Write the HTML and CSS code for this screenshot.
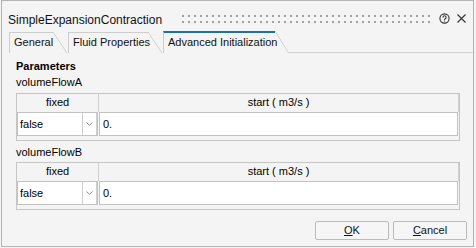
FILE: index.html
```html
<!DOCTYPE html>
<html>
<head>
<meta charset="utf-8">
<link rel="stylesheet" href="styles.css">
</head>
<body>
<div class="window">
  <div class="titlebar">
    <div class="title">SimpleExpansionContraction</div>
    <div class="grip"></div>
    <svg class="help" width="11" height="11" viewBox="0 0 11 11">
      <circle cx="5.5" cy="5.5" r="4.6" fill="none" stroke="#333" stroke-width="1.1"/>
      <path d="M3.9 4.4a1.6 1.6 0 1 1 2.3 1.45c-0.5 0.25-0.7 0.55-0.7 1.1" fill="none" stroke="#333" stroke-width="1.1"/>
      <circle cx="5.5" cy="8.1" r="0.65" fill="#333"/>
    </svg>
    <svg class="close" width="9" height="9" viewBox="0 0 9 9">
      <path d="M0.5 0.5L8.5 8.5M8.5 0.5L0.5 8.5" stroke="#333" stroke-width="1.1"/>
    </svg>
  </div>
  <div class="tabbar">
    <div class="tab tab-general">General</div>
    <div class="tab tab-fluid">Fluid Properties</div>
    <div class="tab tab-active">Advanced Initialization</div>
    <div class="tab-fill"></div>
  </div>
  <div class="pane">
    <div class="section">Parameters</div>
    <div class="label">volumeFlowA</div>
    <div class="grid">
      <div class="hdr">
        <div class="hcell hfixed">fixed</div>
        <div class="hcell hstart">start ( m3/s )</div>
      </div>
      <div class="row">
        <div class="combo">
          <div class="ctext">false</div>
          <div class="carrow"><svg width="7" height="4" viewBox="0 0 7 4"><path d="M0.5 0.5L3.5 3.3L6.5 0.5" fill="none" stroke="#8a8a8a" stroke-width="1"/></svg></div>
        </div>
        <div class="value">0.</div>
      </div>
    </div>
    <div class="label label-b">volumeFlowB</div>
    <div class="grid">
      <div class="hdr">
        <div class="hcell hfixed">fixed</div>
        <div class="hcell hstart">start ( m3/s )</div>
      </div>
      <div class="row">
        <div class="combo">
          <div class="ctext">false</div>
          <div class="carrow"><svg width="7" height="4" viewBox="0 0 7 4"><path d="M0.5 0.5L3.5 3.3L6.5 0.5" fill="none" stroke="#8a8a8a" stroke-width="1"/></svg></div>
        </div>
        <div class="value">0.</div>
      </div>
    </div>
    <div class="buttons">
      <div class="btn"><u>O</u>K</div>
      <div class="btn"><u>C</u>ancel</div>
    </div>
  </div>
</div>
</body>
</html>
```
FILE: styles.css
```css
html, body {
  margin: 0;
  padding: 0;
  background: #f4f4f4;
}
body {
  font-family: "Liberation Sans", Arial, sans-serif;
  font-size: 11px;
  color: #000;
}
.window {
  margin-left: 1px;
  width: 473px;
  height: 247px;
  box-sizing: border-box;
  border: 1px solid #b4b4b4;
  background: #f4f4f4;
  overflow: hidden;
}
.titlebar {
  display: flex;
  align-items: flex-start;
  height: 30px;
  padding: 0 7px 0 6px;
  box-sizing: border-box;
}
.title {
  font-size: 12px;
  line-height: 14px;
  margin-top: 12px;
  color: #111;
}
.grip {
  width: 248px;
  height: 8px;
  margin-top: 14px;
  margin-left: auto;
  background: repeating-linear-gradient(90deg, #a2a2a2 0 2px, transparent 2px 6px);
  -webkit-mask-image: repeating-linear-gradient(180deg, #000 0 2px, transparent 2px 6px);
  mask-image: repeating-linear-gradient(180deg, #000 0 2px, transparent 2px 6px);
}
.help {
  margin-top: 12px;
  margin-left: 9px;
}
.close {
  margin-top: 13px;
  margin-left: 7px;
}
.tabbar {
  display: flex;
  align-items: flex-end;
  height: 22px;
  padding-left: 7px;
}
.tab {
  position: relative;
  box-sizing: border-box;
  height: 21px;
  border-left: 1px solid #cdcdcd;
  border-top: 1px solid #cdcdcd;
  padding-left: 4px;
  line-height: 19px;
  white-space: nowrap;
  color: #111;
}
.tab::after {
  content: "";
  position: absolute;
  top: -1px;
  left: 100%;
  width: 14px;
  height: calc(100% + 1px);
  background: linear-gradient(to top right, transparent calc(50% - 0.6px), #c6c6c6 50%, transparent calc(50% + 0.6px));
}
.tab-general {
  width: 44px;
  margin-right: 15px;
}
.tab-fluid {
  width: 80px;
  margin-right: 15px;
}
.tab-active {
  width: 112px;
  height: 22px;
  border-top: 2px solid #1c71a8;
  line-height: 19px;
}
.tab-active::after {
  top: -2px;
  width: 13px;
  height: calc(100% + 1px);
}
.tab-fill {
  flex: 1;
  height: 22px;
  margin-left: 13px;
  box-sizing: border-box;
  border-bottom: 1px solid #d2d2d2;
}
.pane {
  padding-left: 14px;
}
.section {
  font-weight: bold;
  line-height: 13px;
  margin-top: 7px;
}
.label {
  line-height: 13px;
  margin-top: 3px;
}
.label-b {
  margin-top: 5px;
}
.grid {
  margin-top: 4px;
  width: 444px;
  height: 48px;
  box-sizing: border-box;
  border: 1px solid #c6c6c6;
  background: #f4f4f4;
}
.label-b + .grid {
  margin-top: 3px;
}
.hdr {
  display: flex;
  height: 18px;
}
.hcell {
  box-sizing: border-box;
  height: 18px;
  line-height: 17px;
  text-align: center;
}
.hfixed {
  width: 82px;
  border-right: 1px solid #cfcfcf;
}
.hstart {
  flex: 1;
  border-right: 1px solid #cfcfcf;
}
.row {
  display: flex;
  height: 24px;
}
.combo {
  display: flex;
  width: 81px;
  height: 24px;
  box-sizing: border-box;
  border: 1px solid #c2c2c2;
  background: #fff;
}
.ctext {
  width: 65px;
  box-sizing: border-box;
  border-right: 1px solid #cfcfcf;
  padding-left: 2px;
  line-height: 22px;
}
.carrow {
  flex: 1;
  display: flex;
  align-items: center;
  justify-content: center;
  border-right: 1px solid #cfcfcf;
}
.value {
  width: 359px;
  margin-left: 1px;
  height: 24px;
  box-sizing: border-box;
  border: 1px solid #c2c2c2;
  background: #fff;
  padding-left: 3px;
  line-height: 22px;
}
.buttons {
  display: flex;
  justify-content: flex-end;
  gap: 4px;
  margin-top: 11px;
  padding-right: 6px;
}
.btn {
  width: 74px;
  height: 19px;
  box-sizing: border-box;
  border: 1px solid #bcbcbc;
  border-radius: 2px;
  background: #f6f6f6;
  text-align: center;
  line-height: 17px;
  color: #111;
}
.btn u {
  text-decoration-thickness: 1px;
  text-underline-offset: 1px;
}
```
